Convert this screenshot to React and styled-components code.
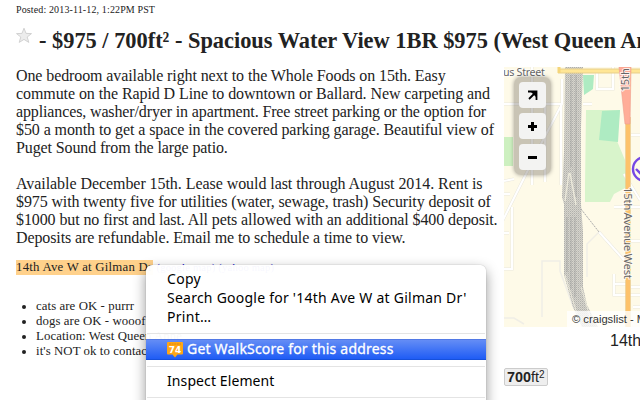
import React from "react";
import styled, { createGlobalStyle } from "styled-components";

const Global = createGlobalStyle`
  body { margin: 0; background: #fff; overflow: hidden; }
`;

const Page = styled.main`
  position: relative;
  width: 640px;
  height: 400px;
  overflow: hidden;
  box-sizing: border-box;
  padding: 4px 0 0 16px;
  font-family: "Liberation Serif", serif;
  color: #222;
`;

const Posted = styled.div`
  font-size: 10px;
  line-height: 12px;
  letter-spacing: ${(p) => p.$track}px;
`;

const Title = styled.h1`
  display: flex;
  align-items: flex-start;
  gap: 6px;
  margin: 12px 0 0;
  height: 39px;
  font-size: 22.4px;
  line-height: 25px;
  white-space: nowrap;
  letter-spacing: ${(p) => p.$track}px;
  svg { flex: none; margin-top: -1px; }
`;

const Columns = styled.div`
  display: grid;
  grid-template-columns: 488px 136px;
`;

const Paragraph = styled.p`
  margin: 0 0 18px;
  font-size: 16px;
  line-height: 18px;
`;

const Line = styled.span`
  display: block;
  width: max-content;
  white-space: nowrap;
  letter-spacing: ${(p) => p.$track || 0}px;
`;

const Address = styled.div`
  margin-top: -5px;
  font-size: 12.8px;
  line-height: 15px;
  letter-spacing: 0.23px;
  white-space: nowrap;
`;

const Marked = styled.mark`
  display: inline-block;
  width: 137px;
  color: inherit;
  background: #ffd18b;
`;

const MapLinks = styled.span`
  font-size: 10.5px;
  color: #00c;
`;

const Facts = styled.ul`
  margin: 24px 0 0;
  padding-left: 20px;
  font-size: 12.8px;
  line-height: 15px;
  letter-spacing: 0.08px;
`;

const Side = styled.aside`
  font-family: "Liberation Sans", sans-serif;
`;

const MapBox = styled.div`
  position: relative;
  width: 136px;
  height: 260px;
  overflow: hidden;
  > svg { display: block; }
`;

const Controls = styled.div`
  position: absolute;
  left: 10px;
  top: 10px;
  display: flex;
  flex-direction: column;
  gap: 5px;
  padding: 5px;
  border-radius: 7px;
  background: rgba(90, 85, 75, 0.32);
  box-shadow: 0 0 4px rgba(0, 0, 0, 0.35);
`;

const ControlButton = styled.button`
  display: block;
  width: 27px;
  height: 26px;
  padding: 0;
  border: 0;
  border-radius: 4px;
  background: #f3f3f2;
  svg { display: block; }
`;

const Attribution = styled.div`
  position: absolute;
  left: 63px;
  bottom: 0;
  padding-left: 5px;
  width: 80px;
  font-size: 11.2px;
  line-height: 16px;
  white-space: nowrap;
  color: #333;
  background: rgba(255, 255, 255, 0.78);
`;

const Caption = styled.div`
  padding: 4px 0 0 106px;
  font-size: 16px;
  line-height: 20px;
  height: 37px;
  box-sizing: border-box;
  white-space: nowrap;
`;

const Tag = styled.div`
  margin-top: 4px;
  width: 44px;
  height: 18px;
  box-sizing: border-box;
  border: 1px solid #ccc;
  border-radius: 2px;
  padding-left: 2px;
  background: #eee;
  font-size: 14.4px;
  line-height: 17px;
  white-space: nowrap;
  sup { font-size: 10px; line-height: 0; vertical-align: 4px; }
`;

const Menu = styled.div`
  position: absolute;
  left: 146px;
  top: 265px;
  width: 340px;
  height: 150px;
  padding-top: 4px;
  box-sizing: border-box;
  border-radius: 6px;
  background: rgba(255, 255, 255, 0.97);
  box-shadow: 0 5px 13px rgba(0, 0, 0, 0.42), 0 0 1px rgba(0, 0, 0, 0.4);
  font-family: "Noto Sans", sans-serif;
  font-size: 14px;
  color: #000;
`;

const MenuItem = styled.div`
  display: flex;
  align-items: center;
  gap: 4px;
  height: ${(p) => p.$height || 19}px;
  padding-left: 21px;
  white-space: nowrap;
  letter-spacing: ${(p) => p.$track || 0}px;
  ${(p) =>
    p.$active &&
    `
    box-sizing: border-box;
    padding-bottom: 2px;
    color: #fff;
    -webkit-text-stroke: 0.3px #fff;
    border-top: 1px solid #5279e6;
    border-bottom: 1px solid #1650dc;
    background: linear-gradient(#648df5, #1f5cf5);
    svg { flex: none; position: relative; top: 1px; }
  `}
`;

const Rule = styled.div`
  height: 1px;
  margin: ${(p) => p.$margin};
  background: #e4e4e4;
`;

const Star = () => (
  <svg width="17" height="18" viewBox="0 0 17 18">
    <path
      d="M8 1.2 L10 6.4 L15.5 6.6 L11.2 10 L12.8 15.4 L8 12.4 L3.2 15.4 L4.8 10 L.5 6.6 L6 6.4Z"
      fill="#ececec"
      stroke="#d2d2d2"
      strokeWidth="1"
    />
  </svg>
);

const ScoreIcon = () => (
  <svg width="16" height="16" viewBox="0 0 16 16" stroke="none">
    <path d="M1 0H15Q16 0 16 1V11.5Q16 12.5 15 12.5H10.5L8 15.5L5.5 12.5H1Q0 12.5 0 11.5V1Q0 0 1 0Z" fill="#ffa615" />
    <path d="M2 2H14" stroke="#d88a14" strokeDasharray="2 .6" />
    <text x="8" y="11.3" textAnchor="middle" fontFamily="DejaVu Sans" fontWeight="bold" fontSize="9" letterSpacing="0" fill="#fff">
      74
    </text>
  </svg>
);

const STREETS = [
  "M0 37H57 M58 12V37L38 75L8 135L-2 155 M57 38V118 M93 5V22H109V0 M28 0V118 M41 38V115",
  "M0 127H6 M0 166H5 M8 140V202H0 M110 140H136 M120 107L136 133 M79 37H88 M127 68H136",
  "M95 165L120 193 M127 174H136 M127 220H136 M110 207V228H136 M110 217H122 M129 240H136 M0 114L10 112",
].join(" ");

const StreetMap = () => (
  <svg width="136" height="260" viewBox="0 0 136 260">
    <defs>
      <pattern id="ties" width="2" height="2" patternUnits="userSpaceOnUse">
        <rect width="2" height="2" fill="#d6d4cc" />
        <rect width="1" height="1" fill="#b0b0ac" />
        <rect x="1" y="1" width="1" height="1" fill="#c3c2bc" />
      </pattern>
    </defs>
    <rect width="136" height="260" fill="#fefae8" />
    <path d="M0 70H9V99H0Z" fill="#cdf0c0" />
    <path d="M82 43H97L116 43L113 74L121 93L123 120L110 127L106 135H81V120Z" fill="#d8f4cb" />
    <path d="M79 8H90L89 22L80 28Z M98 44L116 43L114 75L95 73Z" fill="#aeebc2" />
    <path d={STREETS} fill="none" stroke="#e9e7de" strokeWidth="3" />
    <path d={STREETS} fill="none" stroke="#fff" strokeWidth="2" />
    <path d="M38 250V194H56V204L70 242 M95 165L83 177V210 M0 251H10L20 257" fill="none" stroke="#f0eee6" strokeWidth="1.5" />
    <path d="M61 0H79L77 60L77 137L79 165V220L83 238L94 260H78L69 240L60 208V137L58 130L60 85Z" fill="url(#ties)" />
    <path d="M67 8V100 M72 8V130 M67 150V222 M63 150V205 M71 150V230" stroke="#999" strokeOpacity=".3" strokeWidth="2" />
    <path d="M65 106L61 134 M66 106L72 138" fill="none" stroke="#fefae8" strokeOpacity=".65" strokeWidth="1.4" />
    <path d="M61 208L74 250 M77 220L86 250" fill="none" stroke="#fefae8" strokeOpacity=".6" />
    <path d="M77 142L95 165" stroke="#aaa" strokeDasharray="2 1" />
    <path d="M54 4H136" stroke="#e7cf8b" strokeWidth="5" />
    <path d="M54 4H136" stroke="#ffe695" strokeWidth="3" />
    <path d="M55 0V6" stroke="#f4d579" strokeWidth="3" />
    <path d="M124 50V260" stroke="#e9c888" strokeWidth="5.5" />
    <path d="M124 50V260" stroke="#fdc26a" strokeWidth="4" />
    <path d="M115 0H127L126 57H121Z" fill="#ffad98" stroke="#ef9e8b" strokeWidth=".6" />
    <g fontFamily="Noto Sans" fontSize="12" fill="#676767" stroke="#fff" strokeOpacity=".8" strokeWidth="2" paintOrder="stroke">
      <text x="-1" y="9" fontSize="10.8" strokeWidth="1.5" textLength="42">us Street</text>
      <text transform="translate(124.5 24.5) rotate(-90)" fontSize="11">15th</text>
      <text transform="translate(119.5 120) rotate(90)" fontSize="11.5" textLength="92">15th Avenue West</text>
    </g>
    <g fill="none" stroke="#7548e4" strokeWidth="2.4">
      <circle cx="141" cy="102" r="12" />
      <path d="M132 102L148 118" />
    </g>
  </svg>
);

export default function App() {
  return (
    <Page>
      <Global />
      <Posted $track={0.13}>Posted: 2013-11-12, 1:22PM PST</Posted>
      <Title $track={-0.01}>
        <Star />- $975 / 700ft² - Spacious Water View 1BR $975 (West Queen Anne)
      </Title>
      <Columns>
        <section>
          <Paragraph>
            <Line $track={-0.1}>One bedroom available right next to the Whole Foods on 15th. Easy</Line>
            <Line $track={-0.08}>commute on the Rapid D Line to downtown or Ballard. New carpeting and</Line>
            <Line $track={-0.13}>appliances, washer/dryer in apartment. Free street parking or the option for</Line>
            <Line $track={-0.09}>$50 a month to get a space in the covered parking garage. Beautiful view of</Line>
            <Line $track={-0.12}>Puget Sound from the large patio.</Line>
          </Paragraph>
          <Paragraph>
            <Line $track={-0.06}>Available December 15th. Lease would last through August 2014. Rent is</Line>
            <Line $track={-0.12}>$975 with twenty five for utilities (water, sewage, trash) Security deposit of</Line>
            <Line $track={-0.1}>$1000 but no first and last. All pets allowed with an additional $400 deposit.</Line>
            <Line $track={-0.11}>Deposits are refundable. Email me to schedule a time to view.</Line>
          </Paragraph>
          <Address>
            <Marked>14th Ave W at Gilman Dr</Marked> <MapLinks>(google map) (yahoo map)</MapLinks>
          </Address>
          <Facts>
            <li>cats are OK - purrr</li>
            <li>dogs are OK - wooof</li>
            <li>Location: West Queen Anne</li>
            <li>it's NOT ok to contact this poster</li>
          </Facts>
        </section>
        <Side>
          <MapBox>
            <StreetMap />
            <Controls>
              <ControlButton>
                <svg width="27" height="26" viewBox="0 0 27 26" fill="none" stroke="#000" strokeWidth="1.8">
                  <path d="M9 9.5H17.5V18 M16.5 10.5L10 17" />
                  <path d="M12 10H17.5V15.5Z" fill="#000" stroke="none" />
                </svg>
              </ControlButton>
              <ControlButton>
                <svg width="27" height="26" viewBox="0 0 27 26" stroke="#000" strokeWidth="3">
                  <path d="M9 13.5H18 M13.5 9V18" />
                </svg>
              </ControlButton>
              <ControlButton>
                <svg width="27" height="26" viewBox="0 0 27 26" stroke="#000" strokeWidth="3">
                  <path d="M9 13.5H18" />
                </svg>
              </ControlButton>
            </Controls>
            <Attribution>© craigslist - Map data</Attribution>
          </MapBox>
          <Caption>14th Ave W at Gilman Dr</Caption>
          <Tag>
            <b>700</b>ft<sup>2</sup>
          </Tag>
        </Side>
      </Columns>
      <Menu>
        <MenuItem $track={0.3}>Copy</MenuItem>
        <MenuItem $track={0.24}>Search Google for '14th Ave W at Gilman Dr'</MenuItem>
        <MenuItem $track={0.3}>Print…</MenuItem>
        <Rule $margin="7px 1px 5px" />
        <MenuItem $active $height={21} $track={0.2}>
          <ScoreIcon />
          Get WalkScore for this address
        </MenuItem>
        <Rule $margin="6px 1px 4px" />
        <MenuItem $track={0.1}>Inspect Element</MenuItem>
        <Rule $margin="7px 1px 5px" />
      </Menu>
    </Page>
  );
}
